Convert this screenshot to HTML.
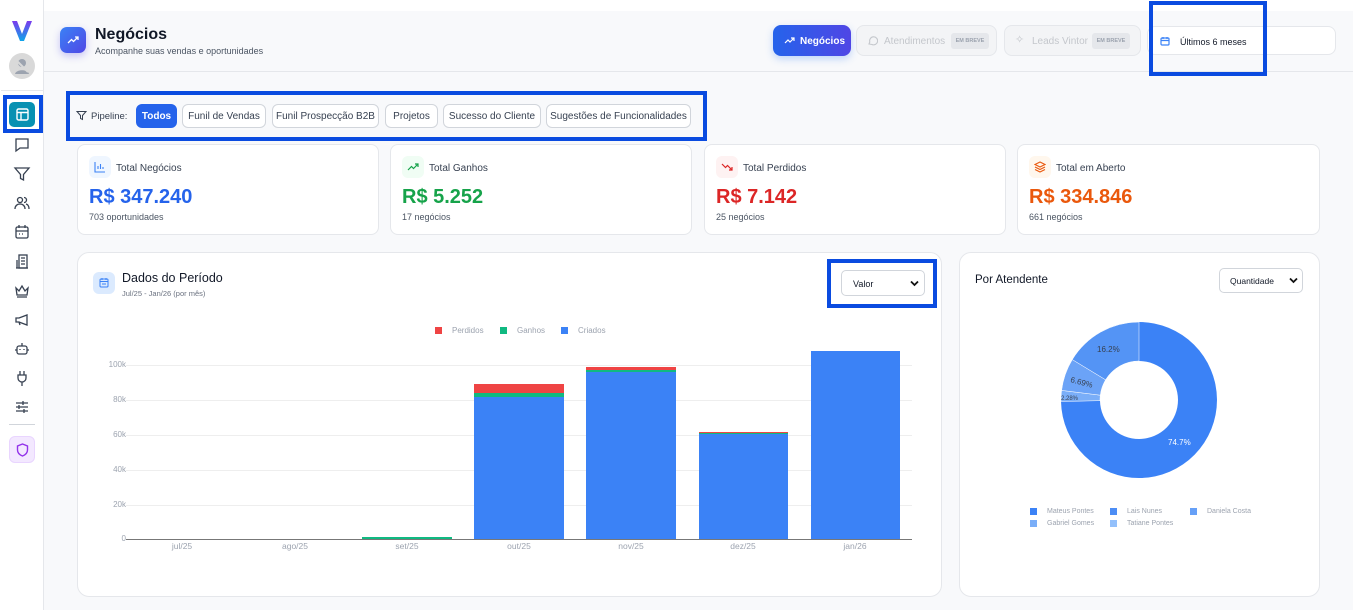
<!DOCTYPE html>
<html><head><meta charset="utf-8"><style>
*{box-sizing:border-box;margin:0;padding:0}
body{width:1353px;height:610px;overflow:hidden;background:#f8f9fb;font-family:"Liberation Sans",sans-serif;position:relative;color:#111827}
.abs{position:absolute}
.side{left:0;top:0;width:44px;height:610px;background:#fff;border-right:1px solid #e5e7eb}
.ic{position:absolute;left:13px;width:18px;height:18px}
.card{position:absolute;background:#fff;border:1px solid #e5e7eb;border-radius:8px}
.chip{position:absolute;top:104px;height:24px;border:1px solid #d1d5db;border-radius:6px;background:#fff;font-size:10px;color:#374151;display:flex;align-items:center;justify-content:center;padding-top:1px}
.box{position:absolute;border:4px solid #0a4be0}
.kt{position:absolute;left:38px;top:18px;font-size:10px;color:#374151}
.kv{position:absolute;left:11px;top:41px;font-size:20px;font-weight:bold}
.ks{position:absolute;left:11px;top:67px;font-size:9px;color:#4b5563}
.kic{position:absolute;left:11px;top:11px;width:22px;height:22px;border-radius:6px}
.yl{position:absolute;font-size:8px;color:#9ca3af;text-align:right;width:30px}
.xl{position:absolute;top:541px;font-size:8.5px;color:#9ca3af;width:60px;text-align:center}
.lg{font-size:7px;color:#9ca3af;position:absolute}
.sq{position:absolute;width:7px;height:7px}
.hb{display:flex;align-items:center}
</style></head><body>
<div class="abs side">
 <svg class="abs" style="left:11px;top:20px" width="22" height="22" viewBox="0 0 22 22"><defs><linearGradient id="g" x1="0" y1="0" x2="0" y2="1"><stop offset="0" stop-color="#7c3aed"/><stop offset="1" stop-color="#0ea5e9"/></linearGradient></defs><path d="M1 1h5l5 13 5-13h5l-8 20h-4z" fill="url(#g)"/></svg>
 <div class="abs" style="left:9px;top:53px;width:26px;height:26px;border-radius:50%;background:#d9d9d9"><svg width="26" height="26" viewBox="0 0 26 26"><circle cx="13" cy="10" r="4" fill="#9ca3af"/><path d="M6 21c1-5 13-5 14 0z" fill="#9ca3af"/><path d="M7 7l12 12" stroke="#d9d9d9" stroke-width="2"/></svg></div>
 <div class="abs" style="left:1px;top:90px;width:42px;height:1px;background:#e5e7eb"></div>
 <div class="abs" style="left:9px;top:102px;width:26px;height:25px;border-radius:5px;background:#0891b2"><svg style="position:absolute;left:7px;top:6px" width="13" height="13" viewBox="0 0 13 13" fill="none" stroke="#fff" stroke-width="1.4"><rect x="1" y="1" width="11" height="11" rx="1.5"/><path d="M1 4.5h11M5 4.5v7.5"/></svg></div>
 <svg class="ic" style="top:136px" viewBox="0 0 18 18" fill="none" stroke="#374151" stroke-width="1.3"><path d="M3 3h12v9H7l-4 3z"/></svg>
 <svg class="ic" style="top:165px" viewBox="0 0 18 18" fill="none" stroke="#374151" stroke-width="1.3"><path d="M2 3h14l-5.5 6.5V15l-3-1.5V9.5z"/></svg>
 <svg class="ic" style="top:194px" viewBox="0 0 18 18" fill="none" stroke="#374151" stroke-width="1.3"><circle cx="7" cy="6" r="2.5"/><path d="M2 15c0-3 2-5 5-5s5 2 5 5M11 3.5a2.5 2.5 0 010 5M13 10c2 .5 3 2.5 3 5"/></svg>
 <svg class="ic" style="top:223px" viewBox="0 0 18 18" fill="none" stroke="#374151" stroke-width="1.3"><rect x="3" y="4" width="12" height="11" rx="1.5"/><path d="M3 8h12M6 2v3M12 2v3M6 11h1M9 11h1M12 11h0"/></svg>
 <svg class="ic" style="top:253px" viewBox="0 0 18 18" fill="none" stroke="#374151" stroke-width="1.3"><rect x="6" y="2" width="8" height="13"/><path d="M4 7v8M3 15h12M8 5h4M8 8h4M8 11h4"/></svg>
 <svg class="ic" style="top:282px" viewBox="0 0 18 18" fill="none" stroke="#374151" stroke-width="1.3"><path d="M3 6l3 3 3-5 3 5 3-3-1 7H4zM4 15h10"/></svg>
 <svg class="ic" style="top:311px" viewBox="0 0 18 18" fill="none" stroke="#374151" stroke-width="1.3"><path d="M3 7v4h3l8 3V4L6 7zM6 11l1 3"/></svg>
 <svg class="ic" style="top:340px" viewBox="0 0 18 18" fill="none" stroke="#374151" stroke-width="1.3"><rect x="4" y="6" width="10" height="8" rx="2"/><path d="M9 3v3M2 10h2M14 10h2M7 9v1M11 9v1"/></svg>
 <svg class="ic" style="top:369px" viewBox="0 0 18 18" fill="none" stroke="#374151" stroke-width="1.3"><path d="M7 2v4M11 2v4M5 6h8v3a4 4 0 01-8 0zM9 13v4"/></svg>
 <svg class="ic" style="top:398px" viewBox="0 0 18 18" fill="none" stroke="#374151" stroke-width="1.3"><path d="M3 5h12M3 9h12M3 13h12M10 3v4M6 7v4M11 11v4"/></svg>
 <div class="abs" style="left:9px;top:424px;width:26px;height:1px;background:#d1d5db"></div>
 <div class="abs" style="left:9px;top:436px;width:26px;height:27px;border-radius:6px;background:#f3e8ff;border:1px solid #e9d5ff"><svg style="position:absolute;left:6px;top:6px" width="13" height="14" viewBox="0 0 13 14" fill="none" stroke="#9333ea" stroke-width="1.4"><path d="M6.5 1L1.5 3v4c0 3 2.5 5 5 6 2.5-1 5-3 5-6V3z"/></svg></div>
</div>
<div class="box" style="left:3px;top:95px;width:40px;height:38px"></div>
<div class="abs" style="left:44px;top:0;width:1309px;height:11px;background:#fff"></div>
<div class="abs" style="left:44px;top:71px;width:1309px;height:1px;background:#e5e7eb"></div>
<div class="abs" style="left:60px;top:27px;width:26px;height:26px;border-radius:7px;background:linear-gradient(135deg,#3b82f6,#4f46e5);box-shadow:0 3px 8px rgba(79,70,229,.3)"><svg style="position:absolute;left:7px;top:8px" width="12" height="10" viewBox="0 0 12 10" fill="none" stroke="#fff" stroke-width="1.3"><path d="M1 8l3.5-3.5 2 2L11 2M8 2h3v3"/></svg></div>
<div class="abs" style="left:95px;top:26px;font-size:16px;font-weight:bold">Negócios</div>
<div class="abs" style="left:95px;top:46px;font-size:9px;color:#4b5563">Acompanhe suas vendas e oportunidades</div>
<div class="abs hb" style="left:773px;top:25px;width:78px;height:31px;border-radius:8px;background:linear-gradient(90deg,#2563eb,#4f46e5);color:#fff;font-size:10px;font-weight:bold;padding-left:27px;padding-top:1px;box-shadow:0 3px 8px rgba(59,130,246,.3)"><svg style="position:absolute;left:11px;top:11px" width="11" height="9" viewBox="0 0 11 9" fill="none" stroke="#fff" stroke-width="1.2"><path d="M1 7l3-3 2 2 4-4M7 2h3v3"/></svg>Negócios</div>
<div class="abs hb" style="left:856px;top:25px;width:141px;height:31px;border-radius:8px;background:#f3f4f6;border:1px solid #e5e7eb;color:#c4c7cc;font-size:10px;padding-left:27px;padding-top:1px"><svg style="position:absolute;left:10px;top:9px" width="11" height="11" viewBox="0 0 11 11" fill="none" stroke="#c4c7cc" stroke-width="1.1"><path d="M2 9l.8-2A4 4 0 115 9.5z"/></svg>Atendimentos<span style="position:absolute;left:94px;top:7px;width:38px;height:16px;background:#e5e7eb;border-radius:3px;font-size:5.5px;font-weight:bold;color:#9ca3af;line-height:16px;text-align:center">EM BREVE</span></div>
<div class="abs hb" style="left:1004px;top:25px;width:137px;height:31px;border-radius:8px;background:#f3f4f6;border:1px solid #e5e7eb;color:#c4c7cc;font-size:10px;padding-left:27px;padding-top:1px"><span style="position:absolute;left:10px;top:7px;font-size:11px">✧</span>Leads Vintor<span style="position:absolute;left:87px;top:7px;width:38px;height:16px;background:#e5e7eb;border-radius:3px;font-size:5.5px;font-weight:bold;color:#9ca3af;line-height:16px;text-align:center">EM BREVE</span></div>
<div class="abs hb" style="left:1147px;top:26px;width:189px;height:29px;border-radius:8px;background:#fff;border:1px solid #e5e7eb;font-size:9px;padding-left:32px;padding-top:2px;color:#111827"><svg style="position:absolute;left:12px;top:9px" width="10" height="10" viewBox="0 0 10 10" fill="none" stroke="#3b82f6" stroke-width="1.2"><rect x="1" y="2" width="8" height="7" rx="1"/><path d="M1 4.5h8M3 1v2M7 1v2"/></svg>Últimos 6 meses</div>
<div class="box" style="left:1149px;top:1px;width:118px;height:75px"></div>
<svg class="abs" style="left:76px;top:110px" width="11" height="11" viewBox="0 0 11 11" fill="none" stroke="#374151" stroke-width="1"><path d="M1 1.5h9L6.5 5.5v4l-2-1v-3z"/></svg>
<div class="abs" style="left:91px;top:111px;font-size:9.5px;color:#374151">Pipeline:</div>
<div class="chip" style="left:136px;width:41px;background:#2563eb;border-color:#2563eb;color:#fff;font-weight:bold">Todos</div>
<div class="chip" style="left:182px;width:84px">Funil de Vendas</div>
<div class="chip" style="left:272px;width:107px">Funil Prospecção B2B</div>
<div class="chip" style="left:385px;width:53px">Projetos</div>
<div class="chip" style="left:443px;width:98px">Sucesso do Cliente</div>
<div class="chip" style="left:546px;width:145px">Sugestões de Funcionalidades</div>
<div class="box" style="left:66px;top:91px;width:641px;height:50px"></div>
<div class="card" style="left:77px;top:144px;width:302px;height:91px"><div class="kic" style="background:#eff6ff"><svg style="position:absolute;left:5px;top:5px" width="12" height="12" viewBox="0 0 12 12" fill="none" stroke="#3b82f6" stroke-width="1.1"><path d="M1 1v10h10M4 8V5M6.5 8V3M9 8V6"/></svg></div><div class="kt">Total Negócios</div><div class="kv" style="color:#2563eb">R$ 347.240</div><div class="ks">703 oportunidades</div></div>
<div class="card" style="left:390px;top:144px;width:302px;height:91px"><div class="kic" style="background:#f0fdf4"><svg style="position:absolute;left:5px;top:6px" width="12" height="10" viewBox="0 0 12 10" fill="none" stroke="#16a34a" stroke-width="1.2"><path d="M1 8l3.5-3.5 2 2L11 2M8 2h3v3"/></svg></div><div class="kt">Total Ganhos</div><div class="kv" style="color:#16a34a">R$ 5.252</div><div class="ks">17 negócios</div></div>
<div class="card" style="left:704px;top:144px;width:302px;height:91px"><div class="kic" style="background:#fef2f2"><svg style="position:absolute;left:5px;top:6px" width="12" height="10" viewBox="0 0 12 10" fill="none" stroke="#dc2626" stroke-width="1.2"><path d="M1 2l3.5 3.5 2-2L11 8M8 8h3V5"/></svg></div><div class="kt">Total Perdidos</div><div class="kv" style="color:#dc2626">R$ 7.142</div><div class="ks">25 negócios</div></div>
<div class="card" style="left:1017px;top:144px;width:303px;height:91px"><div class="kic" style="background:#fff7ed"><svg style="position:absolute;left:5px;top:5px" width="12" height="12" viewBox="0 0 12 12" fill="none" stroke="#ea580c" stroke-width="1.1"><path d="M6 1l5 2.5-5 2.5-5-2.5zM1 6l5 2.5L11 6M1 8.5L6 11l5-2.5"/></svg></div><div class="kt">Total em Aberto</div><div class="kv" style="color:#ea580c">R$ 334.846</div><div class="ks">661 negócios</div></div>
<div class="card" style="left:77px;top:252px;width:865px;height:345px;border-radius:12px"></div>
<div class="abs" style="left:93px;top:272px;width:22px;height:22px;border-radius:6px;background:#dbeafe"><svg style="position:absolute;left:6px;top:5px" width="10" height="11" viewBox="0 0 10 11" fill="none" stroke="#3b82f6" stroke-width="1"><rect x="1" y="2" width="8" height="8" rx="1"/><path d="M1 4.5h8M3 1v2M7 1v2M3 7h4"/></svg></div>
<div class="abs" style="left:122px;top:271px;font-size:12.5px;color:#111827">Dados do Período</div>
<div class="abs" style="left:122px;top:289px;font-size:7.5px;color:#6b7280">Jul/25 - Jan/26 (por mês)</div>
<div class="abs hb" style="left:841px;top:270px;width:84px;height:26px;border:1px solid #d1d5db;border-radius:5px;background:#fff;font-size:9px;padding-left:11px;padding-top:1px">Valor<svg style="position:absolute;right:5px;top:9px" width="9" height="7" viewBox="0 0 9 7"><path d="M1 1.5l3.5 3.5L8 1.5" fill="none" stroke="#111" stroke-width="1.8"/></svg></div>
<div class="box" style="left:827px;top:259px;width:110px;height:49px"></div>
<div class="sq" style="left:435px;top:327px;background:#ef4444"></div><div class="lg" style="left:452px;top:326px;font-size:8px">Perdidos</div>
<div class="sq" style="left:500px;top:327px;background:#10b981"></div><div class="lg" style="left:517px;top:326px;font-size:8px">Ganhos</div>
<div class="sq" style="left:561px;top:327px;background:#3b82f6"></div><div class="lg" style="left:578px;top:326px;font-size:8px">Criados</div>
<svg class="abs" style="left:0;top:0" width="1353" height="610">
 <g stroke="#eeeeee" stroke-width="1"><path d="M126 365.5H912M126 400.5H912M126 435.5H912M126 470.5H912M126 505.5H912"/></g>
 <rect x="362" y="537" width="90" height="2" fill="#10b981"/>
 <rect x="474" y="397" width="90" height="142" fill="#3b82f6"/><rect x="474" y="393" width="90" height="4" fill="#10b981"/><rect x="474" y="384" width="90" height="9" fill="#ef4444"/>
 <rect x="586" y="372" width="90" height="167" fill="#3b82f6"/><rect x="586" y="370" width="90" height="2" fill="#10b981"/><rect x="586" y="367" width="90" height="3" fill="#ef4444"/>
 <rect x="699" y="434" width="89" height="105" fill="#3b82f6"/><rect x="699" y="433" width="89" height="1" fill="#10b981"/><rect x="699" y="432" width="89" height="1" fill="#ef4444"/>
 <rect x="811" y="351" width="89" height="188" fill="#3b82f6"/>
 <path d="M126 539.5H912" stroke="#777" stroke-width="1"/>
 <path d="M1139 322A78 78 0 1 1 1061 401.5L1100 400.7A39 39 0 1 0 1139 361Z" fill="#3b82f6"/>
 <path d="M1061 401.5A78 78 0 0 1 1061.6 390.4L1100.3 395.2A39 39 0 0 0 1100 400.7Z" fill="#7aaef8" stroke="#fff" stroke-width=".5"/>
 <path d="M1061.6 390.4A78 78 0 0 1 1072.3 359.6L1105.6 379.8A39 39 0 0 0 1100.3 395.2Z" fill="#6ba3f7" stroke="#fff" stroke-width=".5"/>
 <path d="M1072.3 359.6A78 78 0 0 1 1139 322L1139 361A39 39 0 0 0 1105.6 379.8Z" fill="#5494f5" stroke="#fff" stroke-width=".5"/>
 <g font-family="Liberation Sans, sans-serif">
 <text x="1097" y="352" font-size="8" fill="#374151">16.2%</text>
 <text x="1070" y="382" font-size="8" fill="#374151" transform="rotate(15 1070 382)">6.69%</text>
 <text x="1061" y="400" font-size="6" fill="#374151">2.28%</text>
 <text x="1168" y="445" font-size="8" fill="#fff">74.7%</text>
 </g>
</svg>
<div class="yl" style="left:96px;top:360px">100k</div>
<div class="yl" style="left:96px;top:395px">80k</div>
<div class="yl" style="left:96px;top:430px">60k</div>
<div class="yl" style="left:96px;top:465px">40k</div>
<div class="yl" style="left:96px;top:500px">20k</div>
<div class="yl" style="left:96px;top:534px">0</div>
<div class="xl" style="left:152px">jul/25</div><div class="xl" style="left:265px">ago/25</div><div class="xl" style="left:377px">set/25</div><div class="xl" style="left:489px">out/25</div><div class="xl" style="left:601px">nov/25</div><div class="xl" style="left:713px">dez/25</div><div class="xl" style="left:825px">jan/26</div>
<div class="card" style="left:959px;top:252px;width:361px;height:345px;border-radius:12px;z-index:-1"></div>
<div class="abs" style="left:975px;top:274px;font-size:11.5px">Por Atendente</div>
<div class="abs hb" style="left:1219px;top:268px;width:84px;height:25px;border:1px solid #d1d5db;border-radius:5px;background:#fff;font-size:8.5px;padding-left:10px;padding-top:1px">Quantidade<svg style="position:absolute;right:4px;top:8px" width="9" height="7" viewBox="0 0 9 7"><path d="M1 1.5l3.5 3.5L8 1.5" fill="none" stroke="#111" stroke-width="1.8"/></svg></div>
<div class="sq" style="left:1030px;top:508px;background:#3b82f6"></div><div class="lg" style="left:1047px;top:508px">Mateus Pontes</div>
<div class="sq" style="left:1110px;top:508px;background:#4c8df5"></div><div class="lg" style="left:1127px;top:508px">Lais Nunes</div>
<div class="sq" style="left:1190px;top:508px;background:#66a0f7"></div><div class="lg" style="left:1207px;top:508px">Daniela Costa</div>
<div class="sq" style="left:1030px;top:520px;background:#7aaef8"></div><div class="lg" style="left:1047px;top:520px">Gabriel Gomes</div>
<div class="sq" style="left:1110px;top:520px;background:#93c0fb"></div><div class="lg" style="left:1127px;top:520px">Tatiane Pontes</div>
</body></html>
